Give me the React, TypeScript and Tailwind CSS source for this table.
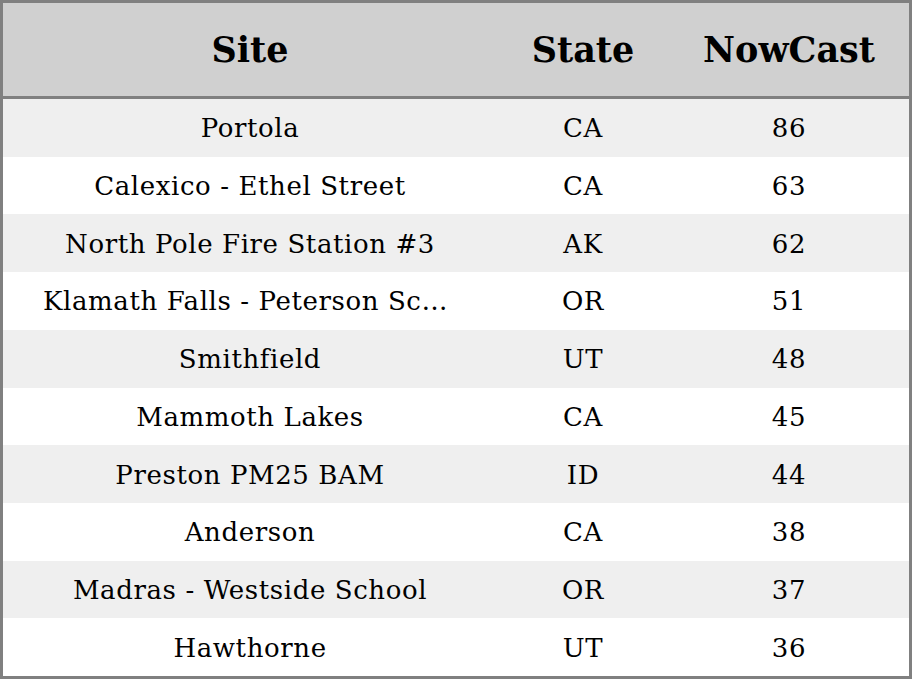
const rows = [
  ["Portola", "CA", "86"],
  ["Calexico - Ethel Street", "CA", "63"],
  ["North Pole Fire Station #3", "AK", "62"],
  ["Klamath Falls - Peterson School", "OR", "51"],
  ["Smithfield", "UT", "48"],
  ["Mammoth Lakes", "CA", "45"],
  ["Preston PM25 BAM", "ID", "44"],
  ["Anderson", "CA", "38"],
  ["Madras - Westside School", "OR", "37"],
  ["Hawthorne", "UT", "36"],
];

export default function App() {
  return (
    <div className="w-[912px] h-[679px] flex flex-col border-[3px] border-[#808080] bg-white text-black font-['DejaVu_Serif',serif]">
      <div className="h-[96px] shrink-0 flex items-center pt-[2px] bg-[#d0d0d0] border-b-[3px] border-[#808080] text-[35px] font-bold">
        <div className="w-[494px] text-center">Site</div>
        <div className="w-[172px] text-center">State</div>
        <div className="flex-1 text-center">NowCast</div>
      </div>
      {rows.map((r, i) => (
        <div
          key={r[0]}
          className={`flex-1 flex items-center pt-[2px] text-[26px] tracking-[0.6px] ${i % 2 === 0 ? "bg-[#efefef]" : "bg-white"}`}
        >
          <div className="w-[494px] px-[40px] text-center truncate">{r[0]}</div>
          <div className="w-[172px] text-center">{r[1]}</div>
          <div className="flex-1 text-center">{r[2]}</div>
        </div>
      ))}
    </div>
  );
}
